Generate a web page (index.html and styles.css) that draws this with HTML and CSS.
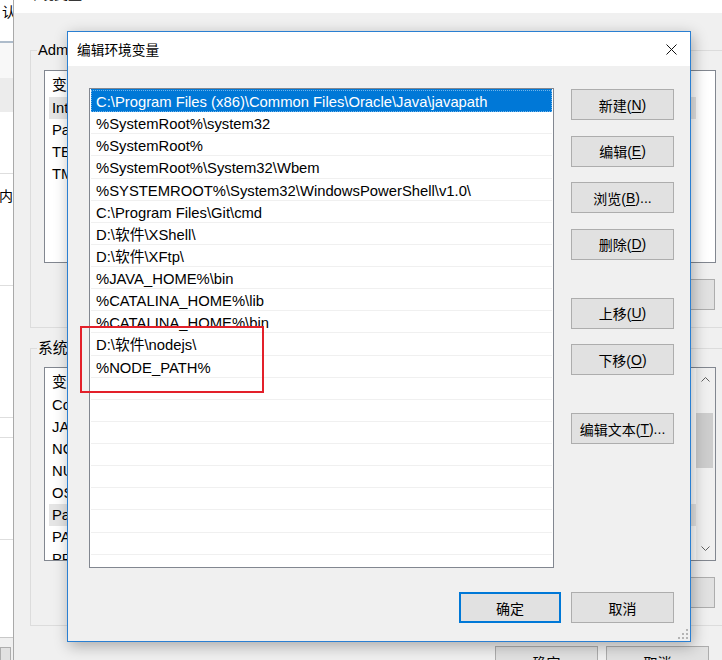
FILE: index.html
```html
<!DOCTYPE html>
<html lang="zh-CN">
<head>
<meta charset="utf-8">
<title>编辑环境变量</title>
<link rel="stylesheet" href="styles.css">
</head>
<body>
<div class="desk">

  <div class="side">
    <div class="s-top">认</div>
    <div class="s-blue"></div>
    <div class="s-pale"></div>
    <div class="s-band"></div>
    <div class="s-cell s-h62"></div>
    <div class="s-cell s-h112 s-text">内存</div>
    <div class="s-cell s-h132"></div>
    <div class="s-cell s-h20"></div>
    <div class="s-cell s-h102"></div>
    <div class="s-cell s-h98 s-dark"></div>
    <div class="s-foot"><div class="s-btn"></div></div>
  </div>

  <div class="env">
    <div class="env-title">环境变量</div>
    <div class="env-body">
      <div class="group">
        <span class="g-label">Administrator 的用户变量(<u>U</u>)</span>
        <div class="lv lv-user">
          <div class="lv-main">
            <div class="lv-head">变量</div>
            <div class="lv-row hl">IntelliJ IDEA</div>
            <div class="lv-row">Path</div>
            <div class="lv-row">TEMP</div>
            <div class="lv-row">TMP</div>
          </div>
        </div>
        <div class="btnrow">
          <div class="btn">新建(<u>N</u>)...</div>
          <div class="btn">编辑(<u>E</u>)...</div>
          <div class="btn">删除(<u>D</u>)</div>
        </div>
      </div>

      <div class="group group-sys">
        <span class="g-label">系统变量(<u>S</u>)</span>
        <div class="lv lv-sys">
          <div class="lv-main">
            <div class="lv-head">变量</div>
            <div class="lv-row">ComSpec</div>
            <div class="lv-row">JAVA_HOME</div>
            <div class="lv-row">NODE_PATH</div>
            <div class="lv-row">NUMBER_OF_PROCESSORS</div>
            <div class="lv-row">OS</div>
            <div class="lv-row hl">Path</div>
            <div class="lv-row">PATHEXT</div>
            <div class="lv-row">PROCESSOR_ARCHITECTURE</div>
          </div>
          <div class="sb">
            <div class="sb-arrow"><svg width="9" height="5" viewBox="0 0 9 5"><path d="M0.5 4.5L4.5 0.5L8.5 4.5" fill="none" stroke="#606060" stroke-width="1"/></svg></div>
            <div class="sb-thumb"></div>
            <div class="sb-arrow sb-down"><svg width="9" height="5" viewBox="0 0 9 5"><path d="M0.5 0.5L4.5 4.5L8.5 0.5" fill="none" stroke="#606060" stroke-width="1"/></svg></div>
          </div>
        </div>
        <div class="btnrow">
          <div class="btn">新建(<u>W</u>)...</div>
          <div class="btn">编辑(<u>I</u>)...</div>
          <div class="btn">删除(<u>L</u>)</div>
        </div>
      </div>

      <div class="env-foot">
        <div class="btn">确定</div>
        <div class="btn">取消</div>
      </div>
    </div>
  </div>

  <div class="dlg">
    <div class="dlg-title">
      <span>编辑环境变量</span>
      <svg class="close" width="11" height="11" viewBox="0 0 11 11"><path d="M0.5 0.5L10.5 10.5M10.5 0.5L0.5 10.5" stroke="#111" stroke-width="1" fill="none"/></svg>
    </div>
    <div class="dlg-body">
      <div class="list">
        <div class="item sel">C:\Program Files (x86)\Common Files\Oracle\Java\javapath</div>
        <div class="item">%SystemRoot%\system32</div>
        <div class="item">%SystemRoot%</div>
        <div class="item">%SystemRoot%\System32\Wbem</div>
        <div class="item">%SYSTEMROOT%\System32\WindowsPowerShell\v1.0\</div>
        <div class="item">C:\Program Files\Git\cmd</div>
        <div class="item">D:\软件\XShell\</div>
        <div class="item">D:\软件\XFtp\</div>
        <div class="item">%JAVA_HOME%\bin</div>
        <div class="item">%CATALINA_HOME%\lib</div>
        <div class="item">%CATALINA_HOME%\bin</div>
        <div class="item">D:\软件\nodejs\</div>
        <div class="item">%NODE_PATH%</div>
        <div class="item"></div>
        <div class="item"></div>
        <div class="item"></div>
        <div class="item"></div>
        <div class="item"></div>
        <div class="item"></div>
        <div class="item"></div>
        <div class="item"></div>
        <div class="item"></div>
      </div>
      <div class="side-btns">
        <div class="btn">新建(<u>N</u>)</div>
        <div class="btn">编辑(<u>E</u>)</div>
        <div class="btn">浏览(<u>B</u>)...</div>
        <div class="btn">删除(<u>D</u>)</div>
        <div class="btn far">上移(<u>U</u>)</div>
        <div class="btn">下移(<u>O</u>)</div>
        <div class="btn far">编辑文本(<u>T</u>)...</div>
      </div>
      <div class="foot">
        <div class="btn ok">确定</div>
        <div class="btn">取消</div>
      </div>
    </div>
    <svg class="grip" width="12" height="12" viewBox="0 0 12 12">
      <rect x="9" y="1" width="2" height="2" fill="#b4b4b4"/>
      <rect x="5" y="5" width="2" height="2" fill="#b4b4b4"/>
      <rect x="9" y="5" width="2" height="2" fill="#b4b4b4"/>
      <rect x="1" y="9" width="2" height="2" fill="#b4b4b4"/>
      <rect x="5" y="9" width="2" height="2" fill="#b4b4b4"/>
      <rect x="9" y="9" width="2" height="2" fill="#b4b4b4"/>
    </svg>
  </div>

  <div class="mark"></div>
</div>
</body>
</html>
```

FILE: styles.css
```css
* { box-sizing: border-box; }
html, body { margin: 0; padding: 0; }
body {
  width: 722px;
  height: 660px;
  overflow: hidden;
  background: #fff;
  color: #000;
  font-family: "Liberation Sans", "Noto Sans CJK SC", sans-serif;
}
u { text-decoration: underline; text-underline-offset: 2px; }

.desk { position: relative; width: 722px; height: 660px; overflow: hidden; }

/* window far behind, only a strip visible */
.side {
  position: absolute; left: 0; top: 0;
  width: 13px; height: 660px;
  background: #fff; overflow: hidden;
  display: flex; flex-direction: column;
  font-size: 14px;
}
.s-top { height: 41px; padding: 3px 0 0 2px; line-height: 18px; flex: none; }
.s-blue { height: 2px; background: #aebccb; flex: none; }
.s-pale { height: 35px; background: #f8f8f8; flex: none; }
.s-band { height: 34px; background: #ececec; flex: none; }
.s-cell { background: #fff; border-bottom: 1px solid #dedede; flex: none; }
.s-dark { border-bottom-color: #c8c8c8; }
.s-h62 { height: 62px; }
.s-h112 { height: 112px; }
.s-h132 { height: 132px; }
.s-h20 { height: 20px; }
.s-h102 { height: 102px; }
.s-h98 { height: 98px; }
.s-text { padding-top: 14px; line-height: 17px; white-space: nowrap; margin-left: -1px; }
.s-foot { flex: 1; background: #f0f0f0; padding-top: 9px; }
.s-btn { width: 11px; height: 20px; background: #e1e1e1; border: 1px solid #adadad; }

/* background window */
.env {
  position: absolute; left: 13px; top: -20px;
  width: 740px; height: 700px;
  border-left: 1px solid #a9a9a9;
  background: #f0f0f0;
}
.env-title {
  height: 33px; background: #fff;
  padding: 0 0 0 12px;
  font-size: 14px; line-height: 29px;
  overflow: hidden;
}
.env-body { padding: 37px 0 0 16px; }
.group {
  position: relative;
  width: 700px;
  border: 1px solid #dcdcdc;
  padding: 19px 0 17px 13px;
}
.group-sys { margin-top: 20px; padding-top: 18px; }
.g-label {
  position: absolute; top: -11px; left: 6px;
  padding: 0 1px;
  background: #f0f0f0;
  font-size: 14.8px; line-height: 20px;
  white-space: nowrap;
}
.lv {
  width: 672px;
  border: 1px solid #828790;
  background: #fff;
  display: flex;
  overflow: hidden;
}
.lv-user { height: 193px; }
.lv-sys { height: 194px; }
.lv-main { flex: 1; min-width: 0; }
.lv-head {
  height: 26px; padding: 3px 0 0 7px;
  line-height: 22px; font-size: 14.8px;
}
.lv-row {
  height: 22px; width: 647px;
  margin-left: 4px; padding-left: 3px;
  line-height: 22px; font-size: 14.8px;
  white-space: nowrap;
}
.lv-row.hl { background: #e5e5e5; }
.sb {
  width: 19px; flex: none;
  background: #f0f0f0;
  display: flex; flex-direction: column;
}
.sb-arrow {
  height: 23px; flex: none;
  display: flex; align-items: center; justify-content: center;
}
.sb-arrow svg { display: block; }
.sb-thumb { height: 55px; width: 17px; margin-top: 22px; background: #cdcdcd; }
.sb-down { margin-top: auto; }

.btnrow {
  width: 672px; margin-top: 16px; padding-right: 1px;
  display: flex; justify-content: flex-end; gap: 10px;
}
.env-foot {
  margin-top: 20px; padding-left: 465px;
  display: flex; gap: 8px;
}

.btn {
  width: 103px; height: 31px; flex: none;
  background: #e1e1e1;
  border: 1px solid #adadad;
  display: flex; align-items: center; justify-content: center;
  font-size: 14px; white-space: nowrap;
}

/* front dialog */
.dlg {
  position: absolute; left: 67px; top: 31px;
  width: 624px; height: 611px;
  border: 1px solid #2a7fd2;
  background: #f0f0f0;
  box-shadow: 2px 4px 14px rgba(0, 0, 0, 0.3);
  display: flex; flex-direction: column;
}
.dlg-title {
  height: 34px; flex: none;
  background: #fff;
  display: flex; align-items: center; justify-content: space-between;
  padding: 0 13px 0 9px;
  font-size: 13.7px;
}
.close { display: block; }
.dlg-body {
  display: grid;
  grid-template-columns: 465px 103px;
  grid-template-rows: 480px 31px;
  column-gap: 17px; row-gap: 24px;
  padding: 22px 0 0 21px;
}
.list {
  border: 1px solid #828790;
  background: #fff;
  padding: 1px 1px 0;
  overflow: hidden;
}
.item {
  height: 22.13px;
  border-bottom: 1px solid #f0f0f0;
  padding: 4px 0 0 5px;
  line-height: 17px;
  font-size: 14.8px;
  white-space: nowrap;
}
.item.sel {
  background: #0078d7; color: #fff;
  border-bottom-color: #0078d7;
  box-shadow: 0 -1px 0 #0078d7;
  outline: 1px dotted rgba(255, 255, 255, 0.45);
  outline-offset: -1px;
}
.side-btns { display: flex; flex-direction: column; padding-top: 1px; }
.side-btns .btn + .btn { margin-top: 15.5px; }
.side-btns .btn.far { margin-top: 38px; }
.foot {
  grid-column: 1 / -1;
  display: flex; justify-content: flex-end; gap: 10px;
}
.btn.ok { width: 102px; border: 2px solid #0078d7; }
.grip { position: absolute; right: 1px; bottom: 1px; }

/* red annotation */
.mark {
  position: absolute; left: 80px; top: 326px;
  width: 184px; height: 67px;
  border: 2px solid #e3202a;
}
```
